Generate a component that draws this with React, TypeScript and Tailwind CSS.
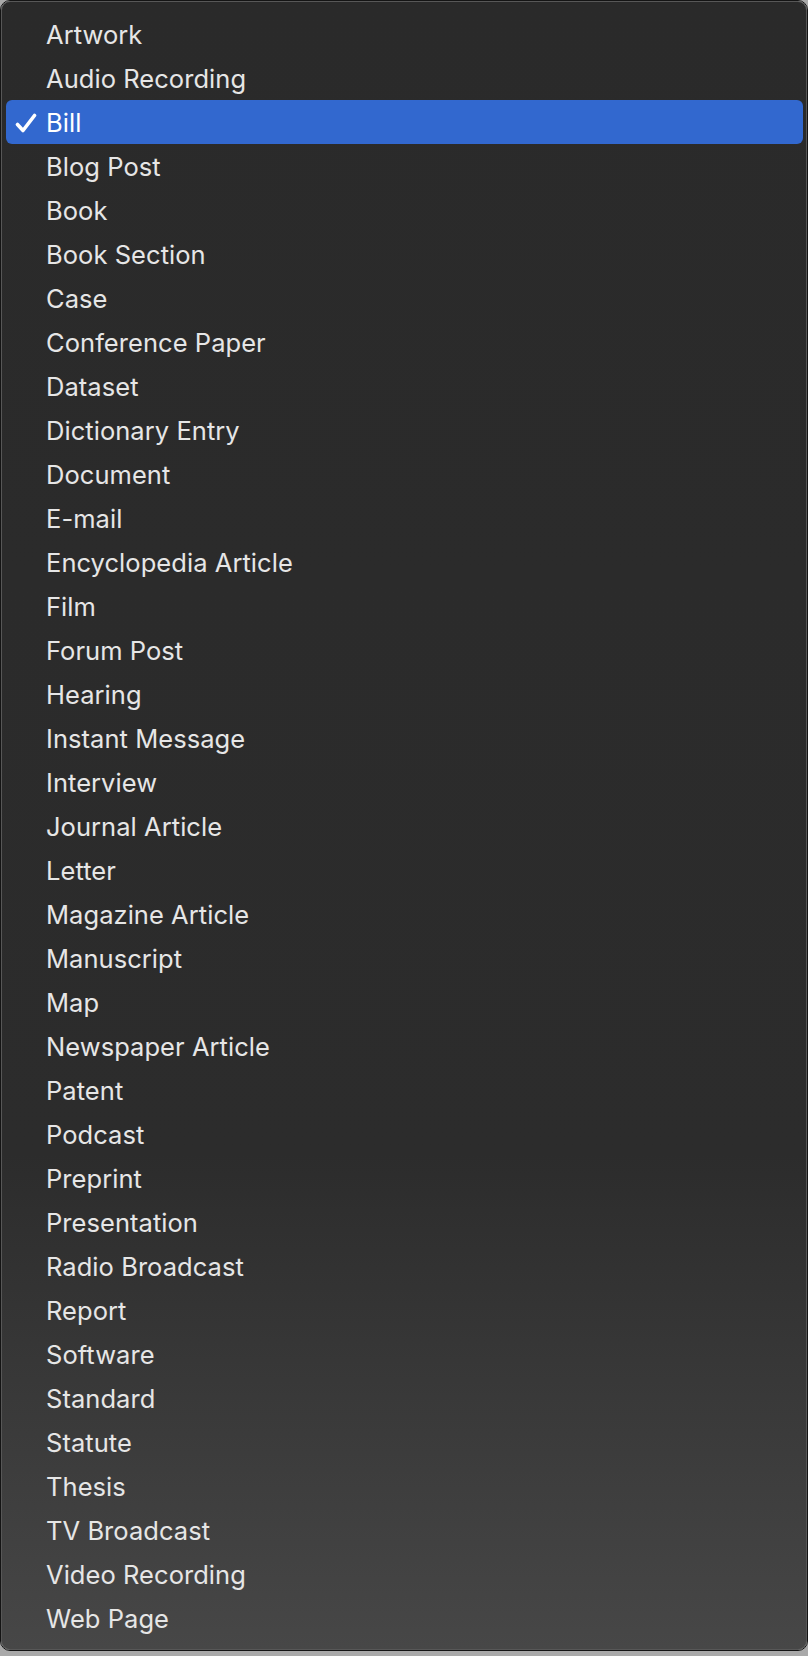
const ITEMS = [
  'Artwork',
  'Audio Recording',
  'Bill',
  'Blog Post',
  'Book',
  'Book Section',
  'Case',
  'Conference Paper',
  'Dataset',
  'Dictionary Entry',
  'Document',
  'E-mail',
  'Encyclopedia Article',
  'Film',
  'Forum Post',
  'Hearing',
  'Instant Message',
  'Interview',
  'Journal Article',
  'Letter',
  'Magazine Article',
  'Manuscript',
  'Map',
  'Newspaper Article',
  'Patent',
  'Podcast',
  'Preprint',
  'Presentation',
  'Radio Broadcast',
  'Report',
  'Software',
  'Standard',
  'Statute',
  'Thesis',
  'TV Broadcast',
  'Video Recording',
  'Web Page',
];

const SELECTED = 'Bill';

function Check() {
  return (
    <svg
      className="absolute left-[9px] top-[13px] h-[20px] w-[22px]"
      viewBox="0 0 22 20"
      fill="none"
      stroke="currentColor"
      strokeWidth="3.6"
      strokeLinecap="round"
      strokeLinejoin="round"
    >
      <path d="M2.5 11.5 L8 17.5 L19.5 2.5" />
    </svg>
  );
}

export default function App() {
  return (
    <div className="h-[1656px] w-[808px] bg-[#a9a9a9]">
      <div className="h-[1651px] rounded-[10px] border border-[#141414]">
        <div
          className="h-full rounded-[9px] border border-[#575757] bg-linear-to-b from-[#2a2a2a] via-[#2c2c2c] via-70% to-[#474747] pl-[4px] pr-[3px] pt-[10px]"
          style={{ fontFamily: 'Inter, "Noto Sans", sans-serif' }}
        >
          {ITEMS.map((item) => {
            const active = item === SELECTED;
            return (
              <div
                key={item}
                className={
                  active
                    ? 'relative flex h-[44px] items-center rounded-[6px] bg-[#3268cf] pl-[40px] pt-[2px] text-[25.5px] tracking-[0.05px] text-white'
                    : 'relative flex h-[44px] items-center rounded-[6px] pl-[40px] pt-[2px] text-[25.5px] tracking-[0.05px] text-[#e6e6e6]'
                }
              >
                {active && <Check />}
                <span className="leading-none">{item}</span>
              </div>
            );
          })}
        </div>
      </div>
    </div>
  );
}
